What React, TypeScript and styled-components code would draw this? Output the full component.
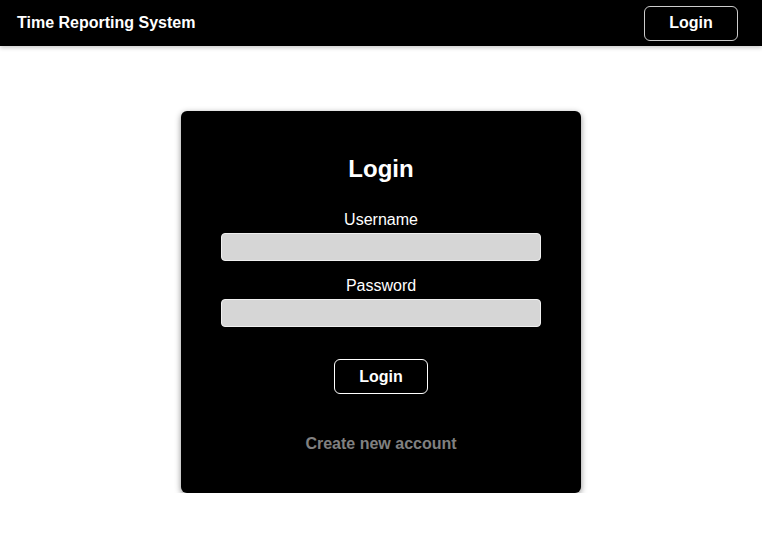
import React from "react";
import styled, { createGlobalStyle } from "styled-components";

const Global = createGlobalStyle`
  html, body { margin: 0; padding: 0; background: #fff; }
  body { font-family: "Liberation Sans", Arial, sans-serif; }
  * { box-sizing: border-box; }
`;

const Header = styled.header`
  height: 46px;
  background: #000;
  display: flex;
  align-items: center;
  justify-content: space-between;
  padding: 0 24px 0 17px;
  box-shadow: 0 2px 4px rgba(0, 0, 0, 0.2);
`;

const Brand = styled.div`
  color: #fff;
  font-weight: bold;
  font-size: 16px;
`;

const OutlineButton = styled.button`
  background: #000;
  color: #fff;
  font-family: "Liberation Sans", Arial, sans-serif;
  font-weight: bold;
  font-size: 16px;
  width: 94px;
  height: 35px;
  border: 1px solid ${(p: { $border?: string }) => p.$border || "#ccc"};
  border-radius: 6px;
  cursor: pointer;
`;

const Main = styled.main`
  display: flex;
  justify-content: center;
  padding-top: 65px;
`;

const Card = styled.div`
  width: 400px;
  background: #000;
  border-radius: 6px;
  box-shadow: 0 2px 6px rgba(0, 0, 0, 0.45);
  padding: 44px 40px 40px;
  display: flex;
  flex-direction: column;
  align-items: center;
  color: #fff;
`;

const Title = styled.h2`
  margin: 0 0 28px;
  font-size: 24px;
  font-weight: bold;
  line-height: 28px;
`;

const Label = styled.label`
  font-size: 16px;
  line-height: 18px;
  margin-bottom: 4px;
`;

const Input = styled.input`
  width: 320px;
  height: 28px;
  background: #d6d6d6;
  border: 1px solid #f0f0f0;
  border-radius: 4px;
  margin-bottom: ${(p: { $mb: number }) => p.$mb}px;
`;

const CreateLink = styled.a`
  margin-top: 41px;
  color: #808080;
  font-weight: bold;
  font-size: 16px;
  line-height: 18px;
  text-decoration: none;
`;

export default function App() {
  return (
    <>
      <Global />
      <Header>
        <Brand>Time Reporting System</Brand>
        <OutlineButton>Login</OutlineButton>
      </Header>
      <Main>
        <Card>
          <Title>Login</Title>
          <Label htmlFor="u">Username</Label>
          <Input id="u" $mb={16} />
          <Label htmlFor="p">Password</Label>
          <Input id="p" type="password" $mb={32} />
          <OutlineButton $border="#fff">Login</OutlineButton>
          <CreateLink href="#">Create new account</CreateLink>
        </Card>
      </Main>
    </>
  );
}
